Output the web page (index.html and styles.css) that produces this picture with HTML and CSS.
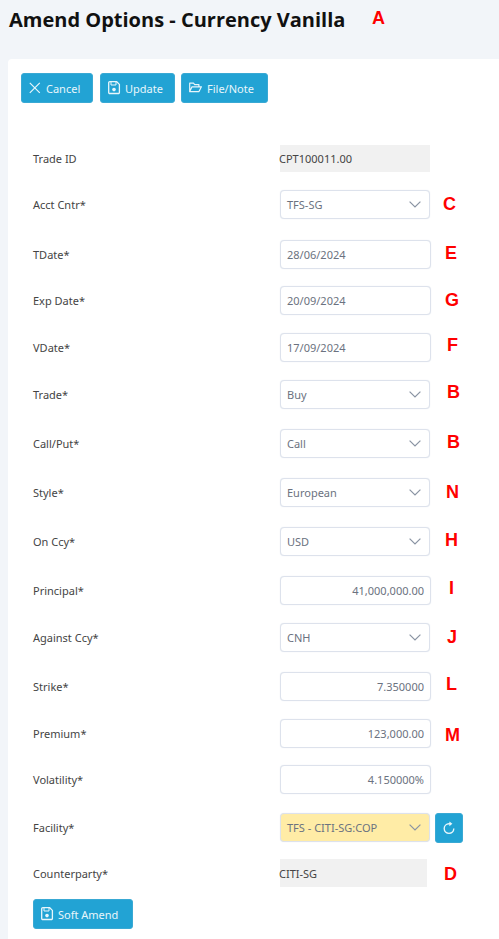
FILE: index.html
```html
<!DOCTYPE html>
<html lang="en">
<head>
<meta charset="utf-8">
<title>Amend Options - Currency Vanilla</title>
<link rel="stylesheet" href="styles.css">
</head>
<body>
<header class="page-head">
  <h1 class="title">Amend Options - Currency Vanilla</h1>
</header>
<main class="card">
  <div class="toolbar">
    <button class="btn btn-cancel"><svg class="ico" viewBox="0 0 14 14"><path d="M0.8 1.8l10 10M10.8 1.8l-10 10" fill="none" stroke="currentColor" stroke-width="1.2"/></svg>Cancel</button>
    <button class="btn btn-update"><svg class="ico" viewBox="0 0 14 14"><path d="M1.8 0.7h6.9l2.7 2.7v8a1.1 1.1 0 0 1-1.1 1.1H1.8a1.1 1.1 0 0 1-1.1-1.1V1.8a1.1 1.1 0 0 1 1.1-1.1z" fill="none" stroke="currentColor" stroke-width="1.3"/><path d="M3 1v3h5V1" fill="none" stroke="currentColor"/><circle cx="6" cy="8.6" r="1.8" fill="currentColor"/></svg>Update</button>
    <button class="btn btn-file"><svg class="ico" viewBox="0 0 14 14"><path d="M0.7 10.6V2.2h3.8l1.2 1.4h4.2v2.2M0.7 10.6h9.3l2.4-4.8H3z" fill="none" stroke="currentColor" stroke-width="1.2" stroke-linejoin="round"/></svg>File/Note</button>
  </div>
  <form class="form">
    <div class="row gap-17"><span class="label">Trade ID</span><div class="field readonly">CPT100011.00</div></div>
    <div class="row gap-21"><span class="label">Acct Cntr*</span><div class="field select">TFS-SG<svg class="chev" viewBox="0 0 12 7"><path d="M0.6 0.6l5.4 5.4 5.4-5.4"/></svg></div></div>
    <div class="row gap-17"><span class="label">TDate*</span><div class="field input">28/06/2024</div></div>
    <div class="row gap-18"><span class="label">Exp Date*</span><div class="field input">20/09/2024</div></div>
    <div class="row gap-18"><span class="label">VDate*</span><div class="field input">17/09/2024</div></div>
    <div class="row gap-20"><span class="label">Trade*</span><div class="field select">Buy<svg class="chev" viewBox="0 0 12 7"><path d="M0.6 0.6l5.4 5.4 5.4-5.4"/></svg></div></div>
    <div class="row gap-20"><span class="label">Call/Put*</span><div class="field select">Call<svg class="chev" viewBox="0 0 12 7"><path d="M0.6 0.6l5.4 5.4 5.4-5.4"/></svg></div></div>
    <div class="row gap-20"><span class="label">Style*</span><div class="field select">European<svg class="chev" viewBox="0 0 12 7"><path d="M0.6 0.6l5.4 5.4 5.4-5.4"/></svg></div></div>
    <div class="row gap-20"><span class="label">On Ccy*</span><div class="field select">USD<svg class="chev" viewBox="0 0 12 7"><path d="M0.6 0.6l5.4 5.4 5.4-5.4"/></svg></div></div>
    <div class="row gap-18"><span class="label">Principal*</span><div class="field input num">41,000,000.00</div></div>
    <div class="row gap-20"><span class="label">Against Ccy*</span><div class="field select">CNH<svg class="chev" viewBox="0 0 12 7"><path d="M0.6 0.6l5.4 5.4 5.4-5.4"/></svg></div></div>
    <div class="row gap-18"><span class="label">Strike*</span><div class="field input num">7.350000</div></div>
    <div class="row gap-17"><span class="label">Premium*</span><div class="field input num">123,000.00</div></div>
    <div class="row gap-19"><span class="label">Volatility*</span><div class="field input num">4.150000%</div></div>
    <div class="row gap-17"><span class="label">Facility*</span><div class="field select warn">TFS - CITI-SG:COP<svg class="chev" viewBox="0 0 12 7"><path d="M0.6 0.6l5.4 5.4 5.4-5.4"/></svg></div><button type="button" class="btn btn-icon"><svg class="ico" viewBox="0 0 14 14"><path d="M11.8 7.6A4.8 4.8 0 1 1 7 2.8h1.2" fill="none" stroke="currentColor" stroke-width="1.4"/><path d="M7.4 0.4l3 2.4-3 2.4z" fill="currentColor"/></svg></button></div>
    <div class="row row-party"><span class="label">Counterparty*</span><div class="field readonly short">CITI-SG</div></div>
    <button type="button" class="btn btn-soft"><svg class="ico" viewBox="0 0 14 14"><path d="M1.8 0.7h6.9l2.7 2.7v8a1.1 1.1 0 0 1-1.1 1.1H1.8a1.1 1.1 0 0 1-1.1-1.1V1.8a1.1 1.1 0 0 1 1.1-1.1z" fill="none" stroke="currentColor" stroke-width="1.3"/><path d="M3 1v3h5V1" fill="none" stroke="currentColor"/><circle cx="6" cy="8.6" r="1.8" fill="currentColor"/></svg>Soft Amend</button>
  </form>
</main>
<div class="marks">
  <span class="mark m-a">A</span>
  <span class="mark m-c">C</span>
  <span class="mark m-e">E</span>
  <span class="mark m-g">G</span>
  <span class="mark m-f">F</span>
  <span class="mark m-b1">B</span>
  <span class="mark m-b2">B</span>
  <span class="mark m-n">N</span>
  <span class="mark m-h">H</span>
  <span class="mark m-i">I</span>
  <span class="mark m-j">J</span>
  <span class="mark m-l">L</span>
  <span class="mark m-m">M</span>
  <span class="mark m-d">D</span>
</div>
</body>
</html>
```
FILE: styles.css
```css
* { box-sizing: border-box; }
html, body { margin: 0; height: 939px; overflow: hidden; }
body { background: #f2f5f9; font-family: "Noto Sans", sans-serif; font-size: 11px; color: #555; position: relative; }
.page-head { height: 59px; padding: 6px 0 0 9px; }
.title { margin: 0; font-family: "Open Sans", sans-serif; font-size: 20px; line-height: 28px; font-weight: 700; color: #111; }
.card { margin-left: 8px; height: 880px; background: #fff; border-radius: 4px 0 0 0; padding: 14px 0 0 13px; }
.toolbar { display: flex; gap: 6px; height: 71px; }
.btn { height: 30px; border: 1px solid #39a9d4; border-radius: 3px; background: #22a3d4; color: #e8f6fb; font: 11px "Noto Sans", sans-serif; padding: 0 0 0 7px; display: inline-flex; align-items: center; gap: 3px; }
.btn-cancel { width: 72px; margin-right: 1px; }
.btn-update { width: 75px; }
.btn-file { width: 87px; gap: 4px; }
.btn-soft { width: 100px; }
.ico { width: 14px; height: 14px; flex: none; }
.form { padding-left: 12px; }
.row { display: flex; align-items: center; height: 29px; }
.gap-17 { margin-bottom: 17px; }
.gap-18 { margin-bottom: 18px; }
.gap-19 { margin-bottom: 19px; }
.gap-20 { margin-bottom: 20px; }
.gap-21 { margin-bottom: 21px; }
.row-party { height: 28px; margin-bottom: 12px; }
.label { width: 247px; color: #444; flex: none; }
.field { width: 150px; height: 29px; display: flex; align-items: center; color: #6b7280; flex: none; }
.readonly { background: #f1f1f1; color: #444; height: 27px; text-indent: -1px; }
.short { width: 147px; height: 28px; }
.input, .select { border: 1px solid #dde2ec; border-radius: 4px; padding: 0 6px; background: #fff; box-shadow: 0 0 1px #dde2ec; }
.input { width: 151px; }
.num { justify-content: flex-end; }
.select { justify-content: space-between; padding-right: 8px; }
.warn { background: #ffeca6; }
.chev { width: 12px; height: 7px; fill: none; stroke: #8a94a3; stroke-width: 1.2; }
.btn-icon { width: 28px; padding: 0; justify-content: center; margin-left: 5px; }
.marks { position: absolute; inset: 0; pointer-events: none; }
.mark { position: absolute; font-family: "Liberation Sans", sans-serif; font-weight: 700; font-size: 18px; line-height: 18px; color: #f00; }
.m-a { left: 372px; top: 9px; }
.m-c { left: 443px; top: 195px; }
.m-e { left: 445px; top: 244px; }
.m-g { left: 445px; top: 291px; }
.m-f { left: 447px; top: 336px; }
.m-b1 { left: 447px; top: 383px; }
.m-b2 { left: 447px; top: 433px; }
.m-n { left: 446px; top: 483px; }
.m-h { left: 445px; top: 531px; }
.m-i { left: 449px; top: 579px; }
.m-j { left: 447px; top: 628px; }
.m-l { left: 446px; top: 675px; }
.m-m { left: 445px; top: 726px; }
.m-d { left: 444px; top: 865px; }
```
